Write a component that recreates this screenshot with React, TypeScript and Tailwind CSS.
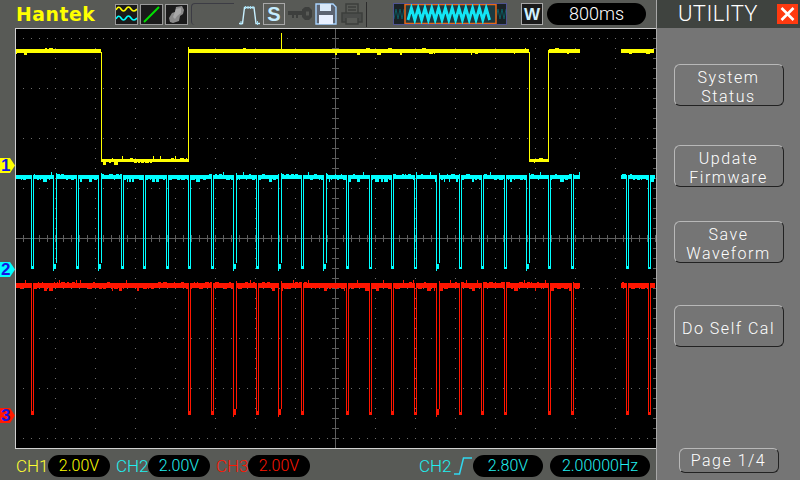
import React from "react";

let seed = 12345;
const rnd = () => {
  seed = (seed * 1664525 + 1013904223) >>> 0;
  return seed / 4294967296;
};
const R = (x: number, y: number, w: number, h: number) => `M${x} ${y}h${w}v${h}h${-w}z`;

const PULSES: [number, number][] = [
  [31, 33], [53, 56], [76, 78], [98, 101], [121, 123], [143, 145], [166, 168], [188, 190], [211, 213],
  [233, 236], [256, 258], [278, 281], [301, 303], [323, 326], [346, 348], [369, 371], [391, 393],
  [414, 416], [436, 439], [459, 461], [481, 483], [504, 506], [526, 529], [548, 550], [571, 573],
  [626, 628], [648, 650],
];
const RED = [31, 188, 211, 233, 256, 278, 301, 346, 369, 391, 414, 436, 459, 481, 504, 548, 571, 626, 648];

function noisyBar(x0: number, x1: number, top: number, h: number, amp: number, density: number) {
  if (x1 <= x0) return "";
  let d = R(x0, top, x1 - x0, h);
  let x = x0;
  while (x < x1) {
    if (rnd() < density) {
      const w = Math.min(1 + Math.floor(rnd() * 4), x1 - x);
      if (rnd() < 0.4) {
        const tall = rnd() < 0.25;
        d += R(x, top - (tall ? amp : 1), tall ? 1 : w, tall ? amp : 1);
      } else {
        const tall = rnd() < 0.3;
        d += R(x, top + h, w, tall ? amp : 1);
      }
      x += w;
    }
    x += 1;
  }
  return d;
}

function digital(top: number, h: number, bottom: number, footH: number, list: [number, number][], amp: number) {
  let d = "";
  const spans: [number, number][] = [[16, 580], [621, 655]];
  for (const [a, b] of spans) {
    let cur = a;
    for (const [p0, p1] of list) {
      if (p0 < a || p1 > b) continue;
      d += noisyBar(cur, p0 + 1, top, h, amp, 0.42);
      cur = p1;
    }
    d += noisyBar(cur, b, top, h, amp, 0.42);
  }
  for (const [p0, p1] of list) {
    const wide = p1 - p0 === 3;
    const mid = p0 % 3 === 0;
    d += R(p0, top + h - 1, 1, bottom - top - h + 1);
    if (wide) {
      d += R(p1, top - 2, 1, bottom - top - 4);
      d += R(p0, bottom - footH - 2, 3, footH + 2);
      d += R(p0, bottom, 1, 2);
    } else {
      d += R(p1, top + h - 1, 1, bottom - top - h + 1);
      d += R(p0, bottom - footH + (mid ? 1 : 0), p1 - p0 + 1, footH - (mid ? 1 : 0));
    }
  }
  return d;
}

const yellowPath = [
  noisyBar(16, 101, 49, 4, 2, 0.06),
  noisyBar(101, 189, 159, 3, 3, 0.45),
  R(101, 52, 1, 108),
  R(188, 47, 1, 113),
  noisyBar(189, 529, 49, 4, 2, 0.05),
  R(281, 33, 1, 17),
  R(529, 52, 1, 108),
  noisyBar(529, 549, 159, 3, 3, 0.5),
  R(548, 50, 1, 110),
  noisyBar(549, 580, 49, 4, 3, 0.08),
  noisyBar(621, 654, 49, 4, 1, 0.08),
].join("");

const cyanPath = digital(175, 4, 269, 3, PULSES, 3);
const redPath = digital(283, 5, 415, 4, PULSES.filter((p) => RED.includes(p[0])), 3);

function graticule() {
  let dots = "";
  let lines = "";
  for (let y = 38; y < 448; y += 50) {
    if (y === 238) continue;
    for (let x = 23; x < 656; x += 8) dots += R(x, y, 1, 1);
  }
  for (let x = 55; x < 656; x += 40) {
    if (x === 335) continue;
    for (let y = 38; y < 448; y += 10) dots += R(x, y, 1, 1);
  }
  lines += R(16, 238, 640, 1) + R(335, 29, 1, 419);
  for (let x = 23; x < 656; x += 8) lines += R(x, 235, 1, 7);
  for (let y = 38; y < 448; y += 10) lines += R(332, y, 7, 1);
  for (let y = 38; y < 448; y += 10) lines += R(653, y, 3, 1);
  return { dots, lines };
}
const grid = graticule();

function Marker({ n, bg, top }: { n: string; bg: string; top: string }) {
  return (
    <div
      className={`absolute left-0 w-[15px] h-[15px] flex items-center pl-[1px] [clip-path:polygon(0_0,10px_0,15px_50%,10px_100%,0_100%)] text-[17px] font-bold leading-none text-[#1414e6] ${bg} ${top}`}
    >
      {n}
    </div>
  );
}

function Pill({ children, className }: { children: React.ReactNode; className: string }) {
  return (
    <div className={`h-[22px] rounded-[11px] bg-black flex items-center justify-center text-[16px] font-light leading-none font-['Roboto',sans-serif] ${className}`}>
      {children}
    </div>
  );
}

function SideButton({ lines, className }: { lines: string[]; className: string }) {
  return (
    <div
      className={`w-[110px] h-[42px] pt-[4px] rounded-[6px] border border-t-[#b8b8b8] border-l-[#b8b8b8] border-r-[#222222] border-b-[#222222] flex flex-col items-center justify-center text-white text-[16px] leading-[19px] tracking-[1.5px] font-light font-['Roboto',sans-serif] ${className}`}
    >
      {lines.map((l) => (
        <span key={l}>{l}</span>
      ))}
    </div>
  );
}

function IconBox({ children, className }: { children: React.ReactNode; className: string }) {
  return (
    <div className={`w-[23px] h-[21px] border border-[#9a9a9a] bg-[#1a1a1a] flex items-center justify-center ${className}`}>
      {children}
    </div>
  );
}

const zig = (x0: number, x1: number, step: number, lo: number, hi: number) => {
  let s = `M${x0} ${hi}`;
  let up = true;
  for (let x = x0 + step; x <= x1; x += step) {
    s += `L${x} ${up ? lo : hi}`;
    up = !up;
  }
  return s;
};

const Label = ({ children, className }: { children: React.ReactNode; className: string }) => (
  <span className={`text-[17px] font-light leading-none font-['Roboto',sans-serif] ${className}`}>{children}</span>
);

export default function App() {
  return (
    <div className="w-[800px] h-[480px] flex overflow-hidden bg-[#585a56] font-['Liberation_Sans',sans-serif]">
      <div className="w-[656px] h-full flex flex-col">
        {/* top bar */}
        <div className="h-[28px] flex items-center shrink-0">
          <div className="ml-[16px] w-[80px] text-[#ffff00] text-[20px] font-bold leading-none tracking-[0.6px] font-['DejaVu_Sans',sans-serif] scale-x-[0.94] origin-left">
            Hantek
          </div>
          <IconBox className="ml-[19px]">
            <svg width="21" height="19" viewBox="0 0 21 19" fill="none">
              <path d="M0 5 Q2.5 0 5 4 T10 4 T15 4 T21 4" stroke="#ffff00" strokeWidth="1.6" />
              <path d="M0 14 Q2.5 9 5 13 T10 13 T15 13 T21 13" stroke="#00ffff" strokeWidth="1.6" />
            </svg>
          </IconBox>
          <IconBox className="ml-[2px]">
            <svg width="21" height="19" viewBox="0 0 21 19" fill="none">
              <path d="M3 17 L18 2" stroke="#00e000" strokeWidth="2" />
            </svg>
          </IconBox>
          <IconBox className="ml-[2px]">
            <svg width="21" height="19" viewBox="0 0 21 19">
              <path d="M3 13 L6 8 L9 7 L10 2 L16 1 L18 5 L17 9 L14 11 L13 16 L7 18 L4 17z" fill="#8a8a8a" />
              <path d="M10 4 L15 3 L15 8 L11 11 L9 14 L7 12z" fill="#a8a8a8" />
            </svg>
          </IconBox>
          <div className="ml-[3px] w-[43px] h-[22px] border-l border-t border-[#3c3c44] rounded-tl-[4px] rounded-bl-[4px]" />
          <svg className="ml-[5px]" width="21" height="21" viewBox="0 0 21 21" fill="none">
            <path d="M0 19.5 H3.5 L5.5 3.5 H15 L17 19.5 H21" stroke="#c8f0ff" strokeWidth="1.4" />
            <path d="M6.5 2V5M9 2V5M11.5 2V5M14 2V5M2 17V21M18.5 17V21" stroke="#9fdcf0" strokeWidth="1" />
          </svg>
          <div className="ml-[3px] w-[22px] h-[22px] border border-[#a8a8a8] bg-[#5a5c58] flex items-center justify-center text-[#c4ecff] text-[20px] font-bold leading-none">
            S
          </div>
          <svg className="ml-[3px]" width="24" height="14" viewBox="0 0 24 14" fill="#3d3f3d">
            <path d="M0 4H14V2.5L17 0H21L24 3V10L21 13H17L14 10V8H10V11H8V8H6V11H4V8H0z" />
            <rect x="18" y="4.5" width="3" height="4" fill="#585a56" />
          </svg>
          <svg className="ml-[3px]" width="22" height="24" viewBox="0 0 22 24" fill="none">
            <path d="M1 2H18L21 5V22H1z" fill="#5c6472" stroke="#a8d4ff" strokeWidth="1.4" />
            <rect x="5" y="2" width="11" height="7" fill="#d8e8f8" />
            <rect x="4" y="13" width="14" height="9" fill="#e8f0ff" />
          </svg>
          <svg className="ml-[4px]" width="22" height="24" viewBox="0 0 22 24" fill="none" stroke="#3d3f3d" strokeWidth="1.5">
            <path d="M5 11V2H17V11" />
            <path d="M1 11H21V20H1z" fill="#4a4c4a" />
            <path d="M5 16V22H17V16" fill="#585a56" />
            <path d="M7 5H15M7 8H15" />
          </svg>
          <div className="ml-[3px] w-[1px] h-[25px] bg-[#2c2c2c]" />
          <div className="ml-[26px] w-[114px] h-[22px] relative bg-[#1a2226] border border-[#505490] flex items-center">
            <svg width="112" height="20" viewBox="0 0 112 20" fill="none">
              <path d={zig(0, 10, 2, 5, 15)} stroke="#0c5a60" strokeWidth="1" />
              <path d={zig(102, 112, 2, 5, 15)} stroke="#0c5a60" strokeWidth="1" />
              <rect x="11" y="0.5" width="91" height="19" fill="#1c3a40" stroke="#e86818" strokeWidth="1.5" />
              <path d={zig(14, 99, 3.4, 4, 16)} stroke="#12e6f5" strokeWidth="2.8" />
            </svg>
          </div>
          <div className="ml-[14px] w-[22px] h-[22px] border border-[#a8a8a8] bg-[#1a1a1a] flex items-center justify-center text-[#d0f0ff] text-[17px] font-bold leading-none">
            W
          </div>
          <Pill className="ml-[4px] w-[99px] text-white text-[18px]">800ms</Pill>
        </div>

        {/* middle */}
        <div className="h-[421px] flex shrink-0">
          <div className="w-[15px] relative shrink-0">
            <Marker n="1" bg="bg-[#ffff00]" top="top-[130px]" />
            <Marker n="2" bg="bg-[#00ffff]" top="top-[234px]" />
            <Marker n="3" bg="bg-[#ff1a00]" top="top-[380px]" />
          </div>
          <div className="w-[641px] h-full border-l border-t border-b border-[#d0d0d0] bg-black">
            <svg width="640" height="419" viewBox="16 29 640 419" shapeRendering="crispEdges" className="block">
              <path d={grid.dots} fill="#6c6c6c" />
              <path d={grid.lines} fill="#5e5e5e" />
              <path d={yellowPath} fill="#ffff00" />
              <path d={cyanPath} fill="#00ffff" />
              <path d={redPath} fill="#ff1500" />
            </svg>
          </div>
        </div>

        {/* bottom */}
        <div className="flex-1 flex items-center pt-[3px]">
          <Label className="ml-[16px] w-[32px] text-[#ffff30]">CH1</Label>
          <Pill className="w-[62px] text-[#ffff00]">2.00V</Pill>
          <Label className="ml-[6px] w-[32px] text-[#20f0f0]">CH2</Label>
          <Pill className="w-[62px] text-[#20f0f0]">2.00V</Pill>
          <Label className="ml-[6px] w-[32px] text-[#ff1500]">CH3</Label>
          <Pill className="w-[62px] text-[#ff1500]">2.00V</Pill>
          <Label className="ml-[109px] w-[34px] text-[#20f0f0]">CH2</Label>
          <svg width="20" height="20" viewBox="0 0 20 20" fill="none">
            <path d="M1 18H6.5L10.5 2H19" stroke="#30d8f0" strokeWidth="1.5" />
          </svg>
          <Pill className="w-[70px] text-[#20f0f0]">2.80V</Pill>
          <Pill className="ml-[7px] w-[100px] text-[#20f0f0]">2.00000Hz</Pill>
        </div>
      </div>

      {/* right panel */}
      <div className="w-[144px] h-full flex flex-col items-center bg-[#757575] border-l border-[#a8a8a8]">
        <div className="w-full h-[28px] shrink-0 bg-[#3f433f] flex items-center">
          <span className="ml-[21px] text-white text-[22px] font-light leading-none tracking-[0.4px] font-['Roboto',sans-serif]">UTILITY</span>
          <div className="ml-auto mr-[2px] w-[21px] h-[20px] bg-[#ff3a10] flex items-center justify-center">
            <svg width="15" height="14" viewBox="0 0 15 14" fill="none">
              <path d="M1.5 1L13.5 13M13.5 1L1.5 13" stroke="#ffffff" strokeWidth="2.6" />
            </svg>
          </div>
        </div>
        <SideButton lines={["System", "Status"]} className="mt-[36px]" />
        <SideButton lines={["Update", "Firmware"]} className="mt-[39px]" />
        <SideButton lines={["Save", "Waveform"]} className="mt-[34px]" />
        <SideButton lines={["Do Self Cal"]} className="mt-[42px]" />
        <div className="mt-auto mb-[7px] w-[100px] h-[25px] rounded-[6px] border border-t-[#b8b8b8] border-l-[#b8b8b8] border-r-[#222222] border-b-[#222222] flex items-center justify-center text-white text-[16px] tracking-[1.5px] leading-none font-light font-['Roboto',sans-serif]">
          Page 1/4
        </div>
      </div>
    </div>
  );
}
